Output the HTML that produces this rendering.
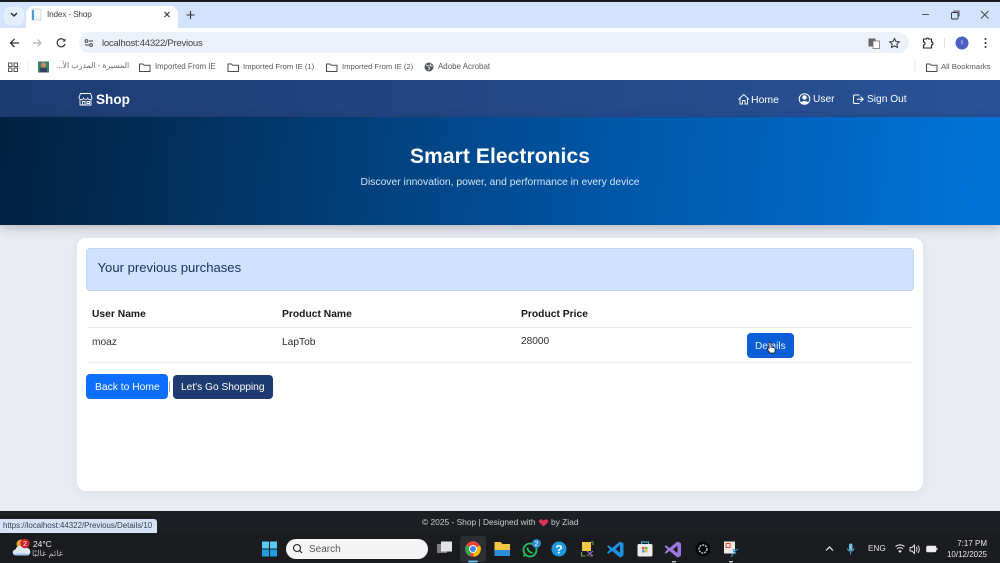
<!DOCTYPE html>
<html><head><meta charset="utf-8"><title>Index - Shop</title>
<style>
*{box-sizing:border-box}
html,body{margin:0;padding:0;width:1000px;height:563px;overflow:hidden;background:#e9ecf3;font-family:"Liberation Sans","Noto Sans CJK SC",sans-serif}
.a{position:absolute}
.t{position:absolute;white-space:nowrap;line-height:1}
svg{position:absolute;overflow:visible}
</style></head><body>
<div class="a" style="left:0;top:0;width:1000px;height:2px;background:#1a1a1a"></div>
<div class="a" style="left:0;top:2px;width:1000px;height:26px;background:#d3e3fd"></div>
<div class="a" style="left:4px;top:7px;width:20px;height:18px;background:#e6eefc;border-radius:6px"></div>
<div class="a" style="left:26px;top:6px;width:152px;height:24px;background:#fff;border-radius:8px 8px 0 0"></div>
<div class="a" style="left:0;top:28px;width:1000px;height:52px;background:#fff"></div>
<div class="a" style="left:79px;top:32px;width:830px;height:21px;background:#edf2fa;border-radius:11px"></div>
<div class="t" style="left:47px;top:11px;font-size:8.2px;color:#3c4043;letter-spacing:-.15px">Index - Shop</div>
<div class="t" style="left:102px;top:38.500px;font-size:9.6px;color:#3f4347;letter-spacing:-.28px">localhost:44322/Previous</div>
<div class="t" style="left:56px;top:62px;font-size:7.8px;color:#6b6b6b;font-family:'Liberation Sans','DejaVu Sans',sans-serif" dir="rtl">المسيرة - المدرب الأ...</div>
<div class="t" style="left:155px;top:62.5px;font-size:7.8px;color:#54585c">Imported From IE</div>
<div class="t" style="left:243px;top:62.5px;font-size:7.68px;color:#54585c">Imported From IE (1)</div>
<div class="t" style="left:342px;top:62.5px;font-size:7.68px;color:#54585c">Imported From IE (2)</div>
<div class="t" style="left:438px;top:62.5px;font-size:7.95px;color:#54585c">Adobe Acrobat</div>
<div class="t" style="left:941px;top:62.5px;font-size:7.75px;color:#54585c">All Bookmarks</div>

<!-- Navbar -->
<div class="a" style="left:0;top:80px;width:1000px;height:37px;background:linear-gradient(90deg,#1e3c72,#2a5298)"></div>
<div class="t" style="left:96px;top:92.500px;font-size:13.5px;font-weight:bold;color:#fff;letter-spacing:.05px">Shop</div>
<div class="t" style="left:751px;top:95px;font-size:10.5px;color:#fff">Home</div>
<div class="t" style="left:813px;top:95px;font-size:10.2px;color:#fff">User</div>
<div class="t" style="left:867px;top:95px;font-size:10.2px;color:#fff">Sign Out</div>

<!-- Hero -->
<div class="a" style="left:0;top:117px;width:1000px;height:108px;background:linear-gradient(95deg,#03203f 0%,#023a70 30%,#0055a5 60%,#0074d9 100%);box-shadow:0 3px 10px rgba(0,0,0,.22)"></div>
<div class="t" style="left:0;width:1000px;text-align:center;top:145.500px;font-size:21px;font-weight:bold;color:#fff;letter-spacing:.08px">Smart Electronics</div>
<div class="t" style="left:0;width:1000px;text-align:center;top:177.5px;font-size:10.33px;color:#d6e6f6">Discover innovation, power, and performance in every device</div>

<!-- Card -->
<div class="a" style="left:77px;top:238px;width:846px;height:253px;background:#fff;border-radius:9px;box-shadow:0 2px 10px rgba(40,50,90,.07)"></div>
<div class="a" style="left:86px;top:248px;width:828px;height:43px;background:#cfe2ff;border:1px solid #bdd5fa;border-radius:4px"></div>
<div class="t" style="left:97.5px;top:260.500px;font-size:13.1px;color:#16315f">Your previous purchases</div>
<div class="t" style="left:92px;top:310px;font-size:10.3px;font-weight:bold;color:#14171a">User Name</div>
<div class="t" style="left:282px;top:310px;font-size:10.3px;font-weight:bold;color:#14171a">Product Name</div>
<div class="t" style="left:521px;top:310px;font-size:10.3px;font-weight:bold;color:#14171a">Product Price</div>
<div class="a" style="left:88px;top:327px;width:824px;height:1px;background:#e6e8ea"></div>
<div class="a" style="left:88px;top:362px;width:824px;height:1px;background:#eff0f2"></div>
<div class="t" style="left:92px;top:337.500px;font-size:10.2px;color:#2a2d31">moaz</div>
<div class="t" style="left:282px;top:337.500px;font-size:10.2px;color:#2a2d31">LapTob</div>
<div class="t" style="left:521px;top:337px;font-size:10.1px;color:#2a2d31">28000</div>
<div class="a" style="left:747px;top:333px;width:47px;height:25px;background:#0b5ed7;border-radius:4px"></div>
<div class="t" style="left:755px;top:341.500px;font-size:10px;color:#e8f0fc">Details</div>
<div class="a" style="left:86px;top:374px;width:82px;height:25px;background:#0d6efd;border-radius:4px"></div>
<div class="t" style="left:95px;top:382.500px;font-size:10.3px;color:#fff">Back to Home</div>
<div class="a" style="left:169px;top:381px;width:1px;height:11px;background:#a99bb0"></div>
<div class="a" style="left:173px;top:374.5px;width:100px;height:24px;background:#1e3c72;border-radius:4px"></div>
<div class="t" style="left:181px;top:382.500px;font-size:10.2px;color:#fff">Let's Go Shopping</div>

<!-- Footer -->
<div class="a" style="left:0;top:511px;width:1000px;height:23px;background:#1c2024"></div>
<div class="t" style="left:422px;top:518px;font-size:8.4px;color:#c8cccf">© 2025 - Shop | Designed with</div>
<div class="t" style="left:551px;top:518px;font-size:8.4px;color:#c8cccf">by Ziad</div>
<div class="a" style="left:0;top:519px;width:157px;height:14px;background:#d6e3f7;border-radius:0 3px 0 0"></div>
<div class="t" style="left:3px;top:522px;font-size:7.9px;color:#39414d">https://localhost:44322/Previous/Details/10</div>

<!-- Taskbar -->
<div class="a" style="left:0;top:533px;width:1000px;height:30px;background:#1a1c20"></div>
<div class="a" style="left:460px;top:536px;width:26px;height:26px;background:#2c2e33;border-radius:3px"></div>
<div class="a" style="left:286px;top:539px;width:142px;height:20px;background:#f4f4f4;border-radius:10px"></div>
<div class="t" style="left:309px;top:544.5px;font-size:10px;color:#55585b">Search</div>
<div class="t" style="left:33px;top:539.5px;font-size:8.4px;color:#f0f0f0">24°C</div>
<div class="t" style="left:33px;top:550px;font-size:8.2px;color:#bdbdbd;width:30px;text-align:left" dir="rtl">غائم غالبًا</div>
<div class="t" style="left:868px;top:545px;font-size:8.2px;color:#e4e4e4">ENG</div>
<div class="t" style="right:13px;top:540px;font-size:8px;color:#e8e8e8">7:17 PM</div>
<div class="t" style="right:13px;top:550.500px;font-size:8px;color:#e8e8e8">10/12/2025</div>

<svg width="1000" height="563" viewBox="0 0 1000 563" style="left:0;top:0" fill="none">
 <!-- tab strip -->
 <path d="M11 13l3 3 3-3" stroke="#1f2937" stroke-width="1.4"/>
 <rect x="32" y="9" width="9" height="11" fill="#f2f4f7" stroke="#c6ccd4" stroke-width=".7"/><rect x="32" y="10" width="2" height="10" fill="#4a9ae0"/>
 <path d="M164.5 12l5 5M169.5 12l-5 5" stroke="#333" stroke-width="1.1"/>
 <path d="M190.500 11v8M186.500 15h8" stroke="#333" stroke-width="1.1"/>
 <path d="M922 14.500h7" stroke="#444" stroke-width=".9"/>
 <rect x="951.500" y="12.500" width="6.500" height="6.500" rx="1" stroke="#333" stroke-width=".9"/><path d="M954 12v-1h5v5h-1" stroke="#333" stroke-width=".8"/>
 <path d="M981 11l7.500 7.500M988.500 11L981 18.500" stroke="#444" stroke-width=".9"/>
 <!-- toolbar -->
 <path d="M19 43h-8M14.500 39l-4 4 4 4" stroke="#333" stroke-width="1.3"/>
 <path d="M33 43h8M37.500 39.500l3.500 3.500-3.500 3.500" stroke="#aeb2b8" stroke-width="1.2"/>
 <path d="M64.800 41a4 4 0 1 0 .2 3" stroke="#333" stroke-width="1.2"/><path d="M65.500 38.500v3h-3z" fill="#333"/>
 <path d="M89 41h4M85 45h4" stroke="#444" stroke-width="1.1"/><circle cx="86.500" cy="41" r="1.400" stroke="#444"/><circle cx="91" cy="45" r="1.400" stroke="#444"/>
 <rect x="868.500" y="38.500" width="7" height="8" fill="#666"/><rect x="873" y="41" width="6.500" height="7.500" fill="#fff" stroke="#777" stroke-width=".8"/>
 <path d="M894.500 38.500l1.500 3 3.300.4-2.400 2.300.6 3.300-3-1.600-3 1.600.6-3.300-2.400-2.300 3.300-.4z" stroke="#333" stroke-width="1"/>
 <path d="M923.500 39h3a1 1 0 0 1 2 0h3v3a1.300 1.300 0 0 1 0 3v3h-8v-3a1.300 1.300 0 0 0 0-3z" stroke="#222" stroke-width="1.100"/>
 <path d="M944.500 38v10" stroke="#d5d8dc" stroke-width=".8"/>
 <circle cx="962" cy="43" r="6.500" fill="#4d5fc0"/><path d="M962 40v4.500" stroke="#c9d0f5" stroke-width=".9"/>
 <circle cx="985.500" cy="39" r="1" fill="#333"/><circle cx="985.500" cy="43" r="1" fill="#333"/><circle cx="985.500" cy="47" r="1" fill="#333"/>
 <!-- bookmarks -->
 <g stroke="#555" stroke-width="1"><rect x="8.500" y="63" width="3.500" height="3.500"/><rect x="14" y="63" width="3.500" height="3.500"/><rect x="8.500" y="68" width="3.500" height="3.500"/><rect x="14" y="68" width="3.500" height="3.500"/></g>
 <path d="M28 61v11" stroke="#dfe1e4" stroke-width=".8"/>
 <rect x="38" y="61.500" width="11" height="11" fill="#3b7e6e"/><circle cx="43.500" cy="65" r="2.500" fill="#c98c5a"/><rect x="40" y="68" width="7" height="4.500" fill="#33415e"/>
 <g stroke="#4a4d50" stroke-width="1"><path d="M139.500 64h3.500l1.200 1.300h5.800v6.200h-10.500z"/><path d="M228 64h3.500l1.200 1.300h5.800v6.200H228z"/><path d="M326.500 64h3.500l1.200 1.300h5.800v6.200h-10.500z"/><path d="M926.500 64h3.500l1.200 1.300h5.800v6.200h-10.500z"/></g>
 <circle cx="429" cy="67" r="4.500" fill="#55585c"/><path d="M426 65l2.500 1 1 2.500-1 1.500M431 63.500l-1 2 2.500 1" stroke="#fff" stroke-width=".8"/>
 <path d="M915 61.500v11" stroke="#dfe1e4" stroke-width=".8"/>
 <!-- navbar icons -->
 <g stroke="#fff" stroke-width=".9"><path d="M79 97.500l1.500-4h10l1.500 4a2.100 2.100 0 0 1-4.300 0 2.100 2.100 0 0 1-4.200 0 2.100 2.100 0 0 1-4.500 0z"/><path d="M80 100v5h11v-5M82.500 105v-3.500h2.500v3.500M87 101.500h2.500v2H87z"/></g>
 <path d="M738.500 99.500l5.200-5 5.300 5M740 98.500v5.500h2.500v-3.500h2.500v3.500h2.500v-5.500" stroke="#fff" stroke-width=".9"/>
 <circle cx="804.500" cy="99" r="5.300" stroke="#fff"/><circle cx="804.500" cy="97.500" r="2.200" fill="#fff"/><path d="M800.800 102.500a4.300 3 0 0 1 7.400 0 5 5 0 0 1-7.400 0z" fill="#fff"/>
 <path d="M859.500 95h-5a1 1 0 0 0-1 1v6.500a1 1 0 0 0 1 1h5M857 99.300h6M860.500 96.800l2.700 2.500-2.700 2.500" stroke="#fff" stroke-width="1"/>
 <!-- hand cursor -->
 <path d="M769 343.500c0-1.500 2-1.500 2 0v3.500l3 .6c1 .2 1.200 1 1.200 2l-.4 3.400h-4.800l-2.500-3.500c-.7-1.200.8-2 1.500-1.100V343.500z" fill="#fff" stroke="#111" stroke-width=".8"/>
 <!-- heart -->
 <path d="M543.500 526.500l-4-3.800c-1.700-2 .9-4.700 2.800-2.900l1.200 1.100 1.200-1.100c1.900-1.800 4.500.9 2.800 2.900z" fill="#dc3558"/>
 <!-- weather -->
 <circle cx="21" cy="544" r="4.500" fill="#f0a030"/>
 <path d="M16 555.500a3 3 0 0 1-.5-6 5 5 0 0 1 9-1.500 4 4 0 0 1 3.500 7.500z" fill="#dfe8f5"/><path d="M15 555.500h13.500v-2H13.500z" fill="#9fc4ec"/>
 <circle cx="25" cy="543.500" r="4.700" fill="#d1242a"/><text x="25" y="546" text-anchor="middle" font-size="7" fill="#fff" font-family="Liberation Sans">2</text>
 <!-- start -->
 <g><rect x="262" y="541.500" width="7" height="7" fill="#58c8f7"/><rect x="270" y="541.500" width="7" height="7" fill="#58c8f7"/><rect x="262" y="549.500" width="7" height="7" fill="#1e9de2"/><rect x="270" y="549.500" width="7" height="7" fill="#1e9de2"/></g>
 <circle cx="297" cy="548" r="3.500" stroke="#222" stroke-width="1.100"/><path d="M299.500 550.500l2.500 2.500" stroke="#222" stroke-width="1.200"/>
 <!-- task view -->
 <rect x="437" y="544" width="10" height="9" fill="#7d7d7d"/><rect x="441" y="541.500" width="11" height="10" fill="#e3e3e3"/>
 <!-- chrome -->
 <circle cx="473" cy="549" r="7.800" fill="#e8453c"/><path d="M473 549l-6.800-3.900a7.800 7.800 0 0 0 3.400 11L473 549z" fill="#34a853"/><path d="M473 549l7-3.500a7.800 7.800 0 0 1-6.500 11.300L473 549z" fill="#fbbc05"/><circle cx="473" cy="549" r="3.500" fill="#4285f4" stroke="#fff"/>
 <rect x="468" y="560.500" width="10" height="2" rx="1" fill="#5dbbe8"/>
 <!-- explorer -->
 <path d="M494.500 542h6l2 2h7.500v12h-15.500z" fill="#f7c843"/><rect x="494.500" y="550" width="15.500" height="6" fill="#2a8fd8"/>
 <!-- whatsapp -->
 <circle cx="530" cy="550" r="6.500" stroke="#25c25e" stroke-width="1.800"/><path d="M523 557l1.500-4.500 2.500 3z" fill="#25c25e"/><path d="M527.500 547.500c0 3 2 5 5 5.500" stroke="#25c25e" stroke-width="1.800"/>
 <circle cx="536.500" cy="543.500" r="4.500" fill="#2f8ad8"/><text x="536.500" y="546" text-anchor="middle" font-size="7" fill="#fff" font-family="Liberation Sans">2</text>
 <!-- help -->
 <circle cx="559" cy="549" r="7.500" fill="#1f9ae0"/><text x="559" y="553.500" text-anchor="middle" font-size="12" font-weight="bold" fill="#fff" font-family="Liberation Sans">?</text>
 <!-- snip yellow app -->
 <rect x="582" y="542" width="9" height="9" fill="#f2c846"/><path d="M581.500 552v4h4M589.500 556h3M593 545v-3h-2" stroke="#67a04e" stroke-width="1.100"/><path d="M587 551l6 5M593 551l-6 5" stroke="#9b72d6" stroke-width="1.100"/>
 <!-- vs code -->
 <path d="M620 541.500l3.500 1.800v12.400l-3.500 1.800-8-6.500-3.500 2.700-1.500-1 3-3.200-3-3.200 1.500-1 3.500 2.700z" fill="#1b8fe0"/><path d="M620 545l-4.500 4 4.500 3.800z" fill="#1a1c20"/>
 <!-- store -->
 <rect x="637.500" y="544" width="15" height="12.500" rx="1.500" fill="#ececec"/><path d="M641.500 544v-2h7v2" stroke="#3fb4c9" stroke-width="1.200"/>
 <rect x="642" y="547" width="2.500" height="2.500" fill="#e25037"/><rect x="645" y="547" width="2.500" height="2.500" fill="#7cb73d"/><rect x="642" y="550" width="2.500" height="2.500" fill="#2f9fe3"/><rect x="645" y="550" width="2.500" height="2.500" fill="#f4b72c"/>
 <!-- vs -->
 <path d="M677.500 541.500l3.500 1.800v12.400l-3.500 1.800-8-6.500-3.500 2.700-1.500-1 3-3.200-3-3.200 1.500-1 3.500 2.700z" fill="#9a78dd"/><path d="M677.500 545.500l-4.500 4 4.500 3.500z" fill="#1a1c20"/>
 <rect x="672" y="561" width="4" height="1.500" fill="#bbb"/>
 <!-- gpt -->
 <circle cx="703" cy="549" r="7.500" fill="#060606"/><circle cx="703" cy="549" r="4" stroke="#c8c8c8" stroke-width="1.400" stroke-dasharray="2 1"/>
 <!-- snipping tool -->
 <rect x="724" y="541.500" width="11" height="12" fill="#f1e6e2"/><rect x="726" y="543.500" width="4" height="4" stroke="#d9483c"/>
 <path d="M733 552l5-3M733 549l3 5M731 557l2-3" stroke="#2a95d5" stroke-width="1.200"/>
 <rect x="729" y="561" width="4" height="1.500" fill="#bbb"/>
 <!-- tray -->
 <path d="M826 550.500l3.500-3.500 3.500 3.500" stroke="#eee" stroke-width="1.200"/>
 <rect x="849" y="543.500" width="3.500" height="7" rx="1.700" fill="#6fc3e8"/><path d="M847.500 548.500a3.300 3.300 0 0 0 6.500 0M850.700 552v2.500" stroke="#6fc3e8" stroke-width=".9"/>
 <g stroke="#eee" stroke-width="1"><path d="M895.500 546.500a7 7 0 0 1 9 0M897 548.800a4.500 4.500 0 0 1 6 0"/></g><path d="M900 553l-1.800-2a2.500 2.500 0 0 1 3.600 0z" fill="#eee"/>
 <path d="M910 547.500h2l2.500-2.500v8.500l-2.500-2.500h-2z" stroke="#eee" stroke-width=".9"/><path d="M916 547a3 3 0 0 1 0 4.500M917.800 545.500a5.500 5.500 0 0 1 0 7.500" stroke="#eee" stroke-width=".9"/>
 <rect x="926.500" y="546" width="9.500" height="6" rx="1.200" fill="#eee" stroke="#eee" stroke-width=".6"/><rect x="936.500" y="548" width="1" height="2" fill="#eee"/>
</svg>
</body></html>
